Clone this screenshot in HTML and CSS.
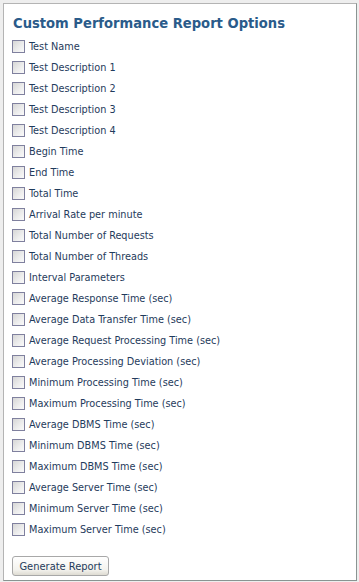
FILE: index.html
```html
<!DOCTYPE html>
<html>
<head>
<meta charset="utf-8">
<link rel="stylesheet" href="styles.css">
</head>
<body>
<div class="panel">
  <h1 class="title">Custom Performance Report Options</h1>
  <ul class="options">
    <li><label><input type="checkbox"><span>Test Name</span></label></li>
    <li><label><input type="checkbox"><span>Test Description 1</span></label></li>
    <li><label><input type="checkbox"><span>Test Description 2</span></label></li>
    <li><label><input type="checkbox"><span>Test Description 3</span></label></li>
    <li><label><input type="checkbox"><span>Test Description 4</span></label></li>
    <li><label><input type="checkbox"><span>Begin Time</span></label></li>
    <li><label><input type="checkbox"><span>End Time</span></label></li>
    <li><label><input type="checkbox"><span>Total Time</span></label></li>
    <li><label><input type="checkbox"><span>Arrival Rate per minute</span></label></li>
    <li><label><input type="checkbox"><span>Total Number of Requests</span></label></li>
    <li><label><input type="checkbox"><span>Total Number of Threads</span></label></li>
    <li><label><input type="checkbox"><span>Interval Parameters</span></label></li>
    <li><label><input type="checkbox"><span>Average Response Time (sec)</span></label></li>
    <li><label><input type="checkbox"><span>Average Data Transfer Time (sec)</span></label></li>
    <li><label><input type="checkbox"><span>Average Request Processing Time (sec)</span></label></li>
    <li><label><input type="checkbox"><span>Average Processing Deviation (sec)</span></label></li>
    <li><label><input type="checkbox"><span>Minimum Processing Time (sec)</span></label></li>
    <li><label><input type="checkbox"><span>Maximum Processing Time (sec)</span></label></li>
    <li><label><input type="checkbox"><span>Average DBMS Time (sec)</span></label></li>
    <li><label><input type="checkbox"><span>Minimum DBMS Time (sec)</span></label></li>
    <li><label><input type="checkbox"><span>Maximum DBMS Time (sec)</span></label></li>
    <li><label><input type="checkbox"><span>Average Server Time (sec)</span></label></li>
    <li><label><input type="checkbox"><span>Minimum Server Time (sec)</span></label></li>
    <li><label><input type="checkbox"><span>Maximum Server Time (sec)</span></label></li>
  </ul>
  <button class="generate" type="button">Generate Report</button>
</div>
</body>
</html>
```

FILE: styles.css
```css
html, body {
  margin: 0;
  padding: 0;
  background: #eeeeee;
}
body {
  padding: 3px 2px 1px 3px;
  font-family: "DejaVu Sans Condensed", "DejaVu Sans", sans-serif;
  font-stretch: condensed;
}
.panel {
  box-sizing: border-box;
  width: 354px;
  height: 578px;
  background: #ffffff;
  border: 1px solid #b4b4b4;
  border-right-color: #8a9492;
  border-bottom-color: #8a9492;
  padding: 0 0 0 8px;
}
.title {
  margin: 0;
  padding: 9px 0 0 1px;
  height: 23px;
  font-size: 14.6px;
  line-height: 20px;
  font-weight: bold;
  color: #2a5b8a;
}
.options {
  list-style: none;
  margin: 0;
  padding: 0;
}
.options li {
  height: 21px;
  display: flex;
  align-items: center;
}
.options label {
  display: flex;
  align-items: center;
  gap: 4px;
  font-size: 10.8px;
  color: #1f3b5c;
}
.options input {
  appearance: none;
  -webkit-appearance: none;
  margin: 0;
  width: 13px;
  height: 13px;
  box-sizing: border-box;
  border: 1px solid #7f809e;
  background: linear-gradient(135deg, #d6d6d6 0%, #eeeeee 60%, #fafafa 100%);
}
.generate {
  margin-top: 16px;
  width: 97px;
  height: 20px;
  padding: 0;
  font-family: inherit;
  font-stretch: condensed;
  font-size: 11px;
  color: #1f3b5c;
  background: linear-gradient(#ffffff, #f4f3ee 70%, #dedbd2);
  border: 1px solid #a8a8a8;
  border-radius: 3px;
}
```
